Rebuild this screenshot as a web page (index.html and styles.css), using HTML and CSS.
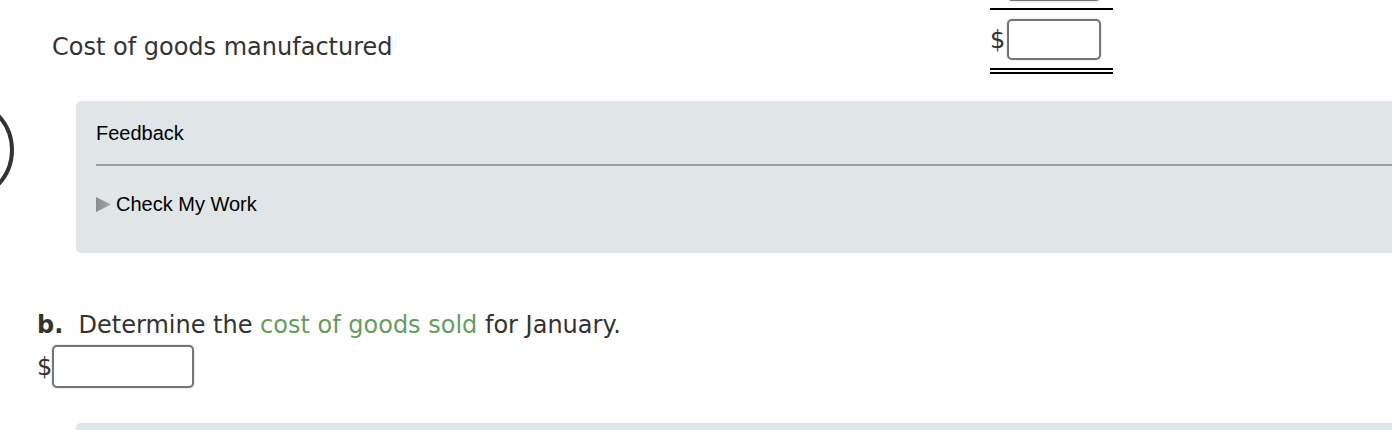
FILE: index.html
```html
<!DOCTYPE html>
<html>
<head>
<meta charset="utf-8">
<link rel="stylesheet" href="styles.css">
</head>
<body>
<div class="page">
  <div class="ring"></div>
  <div class="sheet">
    <div class="row row-prev">
      <div class="label"></div>
      <div class="amount"><span class="cur"></span><span class="box"></span></div>
    </div>
    <div class="row row-total">
      <div class="label">Cost of goods manufactured</div>
      <div class="amount total"><span class="cur">$</span><span class="box"></span></div>
    </div>
  </div>
  <div class="feedback">
    <div class="fb-title">Feedback</div>
    <div class="fb-rule"></div>
    <div class="fb-check"><svg class="tri" width="15" height="15" viewBox="0 0 15 15"><defs><linearGradient id="g" x1="0" x2="1" y1="0" y2="0"><stop offset="0" stop-color="#8a8a8a"/><stop offset="1" stop-color="#a9a9a9"/></linearGradient></defs><polygon points="0,0 15,7.5 0,15" fill="url(#g)"/></svg>Check My Work</div>
  </div>
  <div class="question">
    <p class="q-text"><b>b.</b>&nbsp; Determine the <span class="term">cost of goods sold</span> for January.</p>
    <div class="q-answer"><span class="cur">$</span><span class="box wide"></span></div>
  </div>
  <div class="feedback next"></div>
</div>
</body>
</html>
```
FILE: styles.css
```css
html, body {
  margin: 0;
  padding: 0;
  background: #fff;
  overflow: hidden;
}
.page {
  position: relative;
  width: 1392px;
  height: 430px;
  overflow: hidden;
  font-family: "DejaVu Sans", Verdana, sans-serif;
  color: #333;
}
.ring {
  position: absolute;
  left: -90px;
  top: 98px;
  width: 96px;
  height: 96px;
  border: 4px solid #333;
  border-radius: 50%;
}
.sheet {
  margin-top: -49px;
  padding-left: 52px;
  display: grid;
  grid-template-columns: 938px 123px;
}
.row {
  display: contents;
}
.label {
  display: flex;
  align-items: center;
  font-size: 24px;
  padding-top: 12px;
}
.amount {
  display: flex;
  align-items: center;
  padding: 9px 0 7px 0;
}
.amount.total {
  border-top: 2px solid #000;
  border-bottom: 6px double #000;
  padding: 9px 0 8px 0;
}
.cur {
  width: 17px;
  font-size: 24px;
  color: #333;
}
.box {
  display: block;
  width: 90px;
  height: 37px;
  border: 2px solid #757575;
  border-radius: 5px;
  background: #fff;
  box-shadow: 0 0 2px rgba(0,0,0,0.25);
}
.feedback {
  margin: 27px 0 0 76px;
  height: 152px;
  background: #e0e5e8;
  border-radius: 5px 0 0 5px;
  padding-left: 20px;
  box-sizing: border-box;
  font-family: "Liberation Sans", Arial, sans-serif;
  color: #000;
  font-size: 20px;
}
.fb-title {
  padding-top: 21px;
  height: 42px;
}
.fb-rule {
  height: 2px;
  background: #999ea2;
}
.fb-check {
  display: flex;
  align-items: center;
  margin-top: 27px;
}
.tri {
  margin-right: 5px;
}
.question {
  padding-left: 37px;
}
.q-text {
  margin: 58px 0 0 0;
  font-size: 24px;
}
.q-text b {
  font-weight: bold;
}
.term {
  color: #679c5f;
}
.q-answer {
  display: flex;
  align-items: center;
  margin-top: 6px;
}
.q-answer .cur {
  width: 15px;
}
.box.wide {
  width: 138px;
  height: 39px;
}
.feedback.next {
  margin-top: 35px;
  height: 40px;
}
```
